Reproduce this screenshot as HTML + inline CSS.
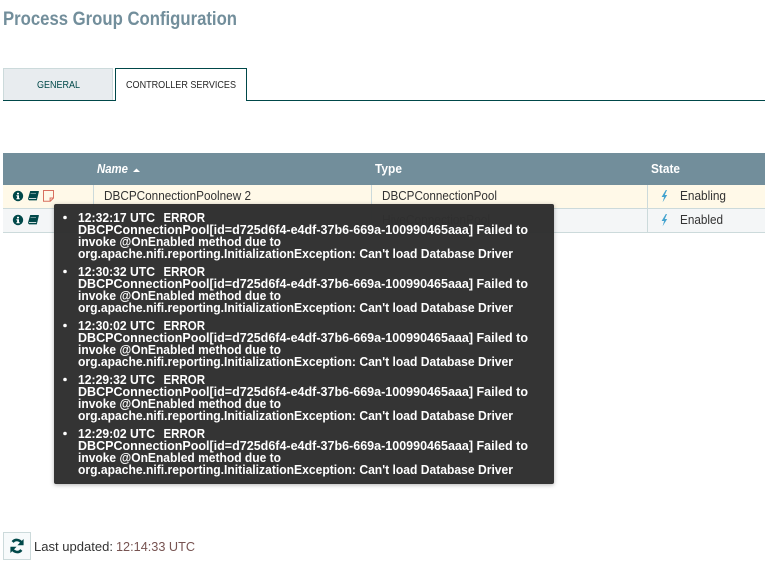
<!DOCTYPE html>
<html><head><meta charset="utf-8"><style>
html,body{margin:0;padding:0;background:#fff;width:765px;height:568px;overflow:hidden}
svg{display:block;font-family:"Liberation Sans",sans-serif}
.h{font-weight:bold;font-size:12.5px;fill:#fff}
.c{font-size:12.5px;fill:#333}
.t{font-weight:bold;font-size:13px;fill:#fff}
</style></head><body>
<svg width="765" height="568" viewBox="0 0 765 568" xmlns="http://www.w3.org/2000/svg">
<defs><filter id="s" x="-5%" y="-5%" width="110%" height="110%"><feDropShadow dx="0" dy="1" stdDeviation="2" flood-color="#000" flood-opacity=".3"/></filter></defs>
<text x="3" y="25" font-size="19" font-weight="bold" fill="#728e9b" textLength="234" lengthAdjust="spacingAndGlyphs">Process Group Configuration</text>

<rect x="3.5" y="68.5" width="109" height="32" fill="#e8ecef" stroke="#ccdadb"/>
<rect x="3" y="100" width="762" height="1" fill="#004849"/>
<path d="M115.5 100.5V68.5H246.5V100.5" fill="#fff" stroke="#004849"/>
<rect x="116" y="99" width="130" height="2" fill="#fff"/>
<text x="37" y="88" font-size="10.5" fill="#004849" textLength="43" lengthAdjust="spacingAndGlyphs">GENERAL</text>
<text x="126" y="88" font-size="10.5" fill="#262626" textLength="110" lengthAdjust="spacingAndGlyphs">CONTROLLER SERVICES</text>

<rect x="3" y="153" width="762" height="32" fill="#728e9b"/>
<rect x="3" y="185" width="762" height="23" fill="#fff9e8"/>
<rect x="3" y="208" width="762" height="24" fill="#f4f6f7"/>
<rect x="3" y="208" width="762" height="1" fill="#ccdadb"/>
<rect x="3" y="232" width="762" height="1" fill="#ccdadb"/>
<rect x="93" y="185" width="1" height="47" fill="#ccdadb"/>
<rect x="371" y="185" width="1" height="47" fill="#ccdadb"/>
<rect x="647" y="185" width="1" height="47" fill="#ccdadb"/>

<text class="h" x="97" y="173" font-style="italic" textLength="31" lengthAdjust="spacingAndGlyphs">Name</text>
<path d="M133 172l3.5-3.5 3.5 3.5z" fill="#fff"/>
<text class="h" x="375" y="173" textLength="27" lengthAdjust="spacingAndGlyphs">Type</text>
<text class="h" x="651" y="173" textLength="29" lengthAdjust="spacingAndGlyphs">State</text>

<text class="c" x="104" y="200" textLength="147" lengthAdjust="spacingAndGlyphs">DBCPConnectionPoolnew 2</text>
<text class="c" x="382" y="200" textLength="115" lengthAdjust="spacingAndGlyphs">DBCPConnectionPool</text>
<text class="c" x="382" y="224" textLength="108" lengthAdjust="spacingAndGlyphs">HiveConnectionPool</text>
<text class="c" x="680" y="200" textLength="46" lengthAdjust="spacingAndGlyphs">Enabling</text>
<text class="c" x="680" y="224" textLength="43" lengthAdjust="spacingAndGlyphs">Enabled</text>

<!-- info icons -->
<g><circle cx="18" cy="196" r="5.2" fill="#004849"/><rect x="17" y="192.8" width="2" height="1.6" fill="#fff"/><path d="M16.4 195.2h2.6v3h.7v1h-3.3v-1h.7v-2h-.7z" fill="#fff"/></g>
<g><circle cx="18" cy="220" r="5.2" fill="#004849"/><rect x="17" y="216.8" width="2" height="1.6" fill="#fff"/><path d="M16.4 219.2h2.6v3h.7v1h-3.3v-1h.7v-2h-.7z" fill="#fff"/></g>
<!-- book icons -->
<path d="M30.2 191h8.6v1l-2 8.4h-7.6q-1.4-.6-1-2.4z" fill="#004849"/>
<path d="M30.6 193.6h5.4" stroke="#fff" stroke-width=".6" stroke-opacity=".7"/><path d="M29 198.4h7.2" stroke="#fff" stroke-width=".8"/>
<path d="M30.2 215h8.6v1l-2 8.4h-7.6q-1.4-.6-1-2.4z" fill="#004849"/>
<path d="M30.6 217.6h5.4" stroke="#fff" stroke-width=".6" stroke-opacity=".7"/><path d="M29 222.4h7.2" stroke="#fff" stroke-width=".8"/>
<!-- note icon -->
<path d="M43.5 190.5h10v7.5l-3.2 3.2h-6.8zM53.3 198h-3.2v3" fill="none" stroke="#d8705f" stroke-width="1"/>
<!-- bolts -->
<path d="M665.8 190l-4.2 7h2.5l-1.5 5.2 4.6-7.2h-2.4l2.2-5z" fill="#44a3cf"/>
<path d="M665.8 214l-4.2 7h2.5l-1.5 5.2 4.6-7.2h-2.4l2.2-5z" fill="#44a3cf"/>

<rect x="54" y="204" width="500" height="280" rx="2" fill="#2e2e2e" fill-opacity=".97" filter="url(#s)"/>

<g><circle cx="65" cy="217.5" r="1.8" fill="#fff"/>
<text class="t" x="78" y="222" textLength="77" lengthAdjust="spacingAndGlyphs">12:32:17 UTC</text><text class="t" x="163.5" y="222" textLength="41.5" lengthAdjust="spacingAndGlyphs">ERROR</text>
<text class="t" x="78" y="234" textLength="450" lengthAdjust="spacingAndGlyphs">DBCPConnectionPool[id=d725d6f4-e4df-37b6-669a-100990465aaa] Failed to</text>
<text class="t" x="78" y="246" textLength="203" lengthAdjust="spacingAndGlyphs">invoke @OnEnabled method due to</text>
<text class="t" x="78" y="258" textLength="435" lengthAdjust="spacingAndGlyphs">org.apache.nifi.reporting.InitializationException: Can't load Database Driver</text></g>

<g><circle cx="65" cy="271.5" r="1.8" fill="#fff"/>
<text class="t" x="78" y="276" textLength="77" lengthAdjust="spacingAndGlyphs">12:30:32 UTC</text><text class="t" x="163.5" y="276" textLength="41.5" lengthAdjust="spacingAndGlyphs">ERROR</text>
<text class="t" x="78" y="288" textLength="450" lengthAdjust="spacingAndGlyphs">DBCPConnectionPool[id=d725d6f4-e4df-37b6-669a-100990465aaa] Failed to</text>
<text class="t" x="78" y="300" textLength="203" lengthAdjust="spacingAndGlyphs">invoke @OnEnabled method due to</text>
<text class="t" x="78" y="312" textLength="435" lengthAdjust="spacingAndGlyphs">org.apache.nifi.reporting.InitializationException: Can't load Database Driver</text></g>

<g><circle cx="65" cy="325.5" r="1.8" fill="#fff"/>
<text class="t" x="78" y="330" textLength="77" lengthAdjust="spacingAndGlyphs">12:30:02 UTC</text><text class="t" x="163.5" y="330" textLength="41.5" lengthAdjust="spacingAndGlyphs">ERROR</text>
<text class="t" x="78" y="342" textLength="450" lengthAdjust="spacingAndGlyphs">DBCPConnectionPool[id=d725d6f4-e4df-37b6-669a-100990465aaa] Failed to</text>
<text class="t" x="78" y="354" textLength="203" lengthAdjust="spacingAndGlyphs">invoke @OnEnabled method due to</text>
<text class="t" x="78" y="366" textLength="435" lengthAdjust="spacingAndGlyphs">org.apache.nifi.reporting.InitializationException: Can't load Database Driver</text></g>

<g><circle cx="65" cy="379.5" r="1.8" fill="#fff"/>
<text class="t" x="78" y="384" textLength="77" lengthAdjust="spacingAndGlyphs">12:29:32 UTC</text><text class="t" x="163.5" y="384" textLength="41.5" lengthAdjust="spacingAndGlyphs">ERROR</text>
<text class="t" x="78" y="396" textLength="450" lengthAdjust="spacingAndGlyphs">DBCPConnectionPool[id=d725d6f4-e4df-37b6-669a-100990465aaa] Failed to</text>
<text class="t" x="78" y="408" textLength="203" lengthAdjust="spacingAndGlyphs">invoke @OnEnabled method due to</text>
<text class="t" x="78" y="420" textLength="435" lengthAdjust="spacingAndGlyphs">org.apache.nifi.reporting.InitializationException: Can't load Database Driver</text></g>

<g><circle cx="65" cy="433.5" r="1.8" fill="#fff"/>
<text class="t" x="78" y="438" textLength="77" lengthAdjust="spacingAndGlyphs">12:29:02 UTC</text><text class="t" x="163.5" y="438" textLength="41.5" lengthAdjust="spacingAndGlyphs">ERROR</text>
<text class="t" x="78" y="450" textLength="450" lengthAdjust="spacingAndGlyphs">DBCPConnectionPool[id=d725d6f4-e4df-37b6-669a-100990465aaa] Failed to</text>
<text class="t" x="78" y="462" textLength="203" lengthAdjust="spacingAndGlyphs">invoke @OnEnabled method due to</text>
<text class="t" x="78" y="474" textLength="435" lengthAdjust="spacingAndGlyphs">org.apache.nifi.reporting.InitializationException: Can't load Database Driver</text></g>

<rect x="3.5" y="532.5" width="27" height="27" fill="#f7fafb" stroke="#ccdadb"/>
<path d="M22 544a5.4 5.4 0 0 0-9.4-2" fill="none" stroke="#004849" stroke-width="2.6"/>
<path d="M23.6 539v6.2h-6.2z" fill="#004849"/>
<path d="M12 548a5.4 5.4 0 0 0 9.4 2" fill="none" stroke="#004849" stroke-width="2.6"/>
<path d="M10.4 553v-6.2h6.2z" fill="#004849"/>
<text x="34" y="551" font-size="12.5" fill="#333" textLength="79" lengthAdjust="spacingAndGlyphs">Last updated:</text>
<text x="116" y="551" font-size="12.5" fill="#775351" textLength="79" lengthAdjust="spacingAndGlyphs">12:14:33 UTC</text>
</svg>
</body></html>
